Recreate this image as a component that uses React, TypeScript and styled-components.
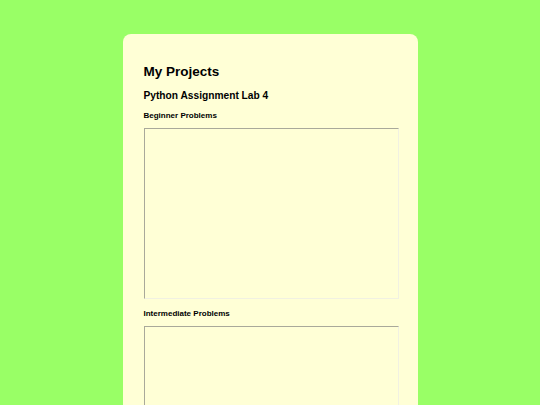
import React from 'react';
import styled, { createGlobalStyle } from 'styled-components';

const GlobalStyle = createGlobalStyle`
    html, body {
        margin: 0;
        padding: 0;
        background: #99ff66;
        font-family: "Liberation Sans", Arial, sans-serif;
        color: #000;
    }
`;

const Page = styled.div`
    display: flex;
    justify-content: center;
    padding-top: 34px;
    min-height: 405px;
    box-sizing: border-box;
`;

const Card = styled.div`
    width: 295px;
    box-sizing: border-box;
    background: #ffffd6;
    border-radius: 8px 8px 0 0;
    padding: 30px 19px 40px 21px;
    display: flex;
    flex-direction: column;
`;

const Title = styled.h1`
    margin: 0;
    font-size: 13.5px;
    line-height: 16px;
    font-weight: bold;
`;

const ProjectName = styled.h2`
    margin: 10px 0 0;
    font-size: 10.2px;
    line-height: 12px;
    font-weight: bold;
`;

const Section = styled.section<{ first?: boolean }>`
    display: flex;
    flex-direction: column;
    margin-top: ${(p) => (p.first ? '9px' : '10px')};
`;

const SectionTitle = styled.h4`
    margin: 0 0 7px;
    font-size: 8px;
    line-height: 10px;
    font-weight: bold;
`;

const Frame = styled.div`
    width: 255px;
    height: 171px;
    box-sizing: border-box;
    border-style: solid;
    border-width: 1.5px;
    border-color: #a9a99a #f1f1e2 #f1f1e2 #a9a99a;
    background: #ffffd6;
`;

const sections = ['Beginner Problems', 'Intermediate Problems'];

const App = () => {
    return (
        <>
            <GlobalStyle />
            <Page>
                <Card>
                    <Title>My Projects</Title>
                    <ProjectName>Python Assignment Lab 4</ProjectName>
                    {sections.map((s, i) => (
                        <Section key={s} first={i === 0}>
                            <SectionTitle>{s}</SectionTitle>
                            <Frame />
                        </Section>
                    ))}
                </Card>
            </Page>
        </>
    );
};

export default App;
